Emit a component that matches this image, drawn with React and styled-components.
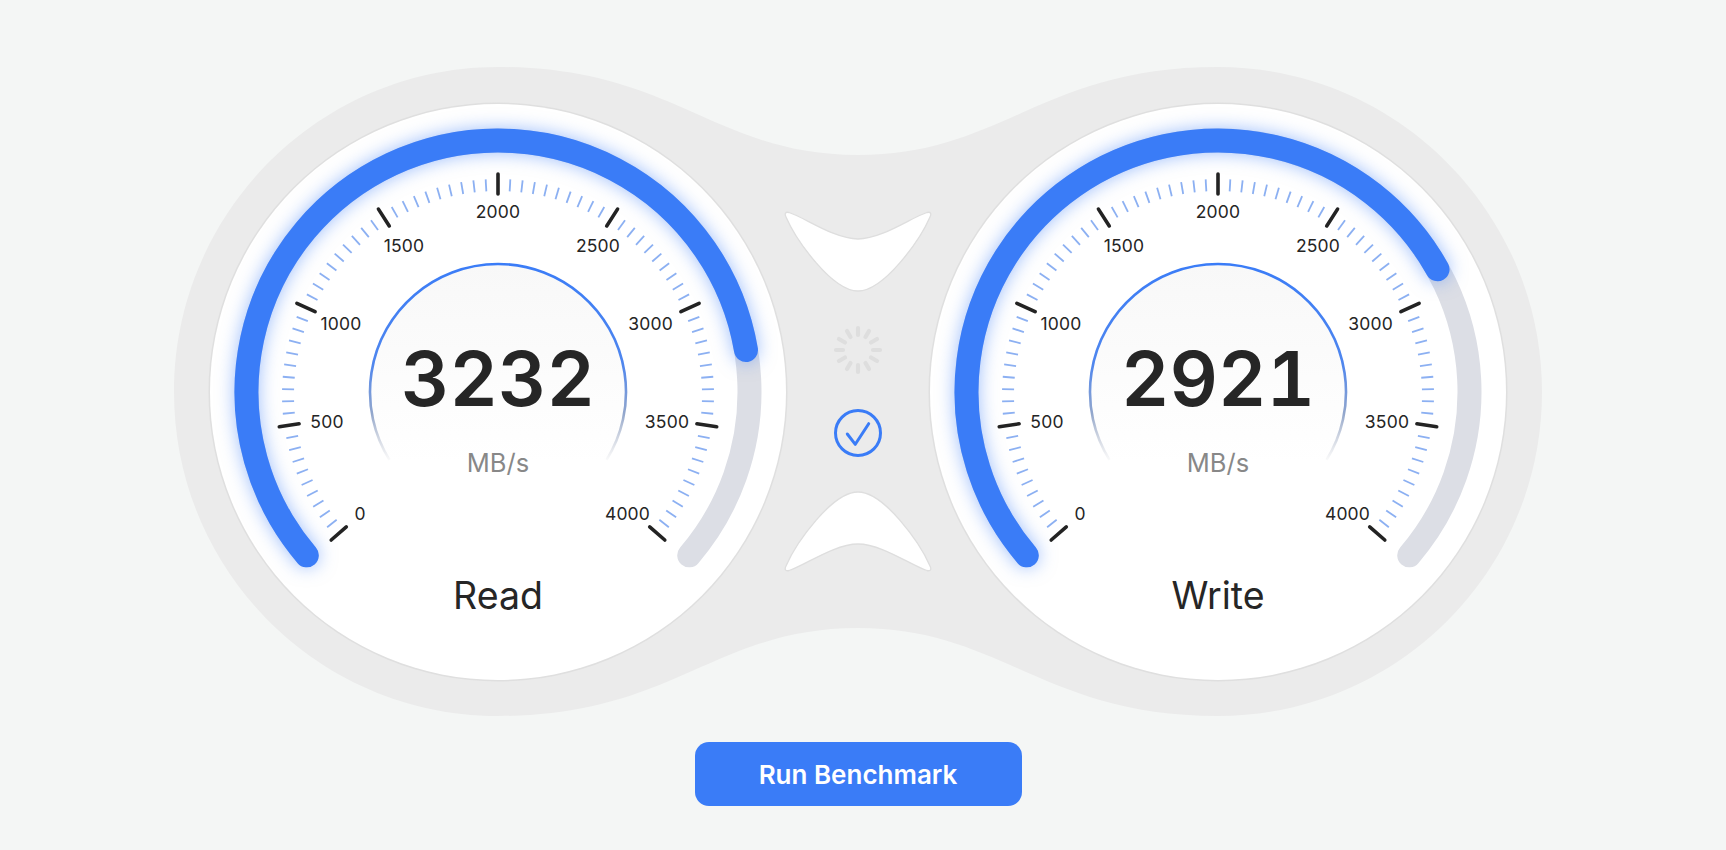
import React from "react";
import styled, { createGlobalStyle } from "styled-components";

const GlobalStyle = createGlobalStyle`
  html, body {
    margin: 0;
    padding: 0;
    background: #f4f6f5;
    font-family: Inter, "Noto Sans", "Liberation Sans", sans-serif;
  }
`;

const BLUE = "#3a7cf7";

const Page = styled.div`
  display: flex;
  flex-direction: column;
  align-items: center;
  width: 1716px;
  height: 850px;
  padding-top: 67px;
  box-sizing: border-box;
  overflow: hidden;
`;

const Stage = styled.div`
  position: relative;
  display: flex;
  justify-content: center;
  width: 1368px;
  height: 650px;
  padding-top: 37px;
  box-sizing: border-box;
`;

const Backdrop = styled.svg`
  position: absolute;
  left: 0;
  top: 0;
  width: 1368px;
  height: 650px;
`;

const Dial = styled.div`
  position: relative;
  flex: none;
  width: 576px;
  height: 576px;
  border-radius: 50%;
  background: #fff;
  box-shadow: 0 0 0 1.5px #dfdfdf;
`;

const DialArt = styled.svg`
  position: absolute;
  inset: 0;
  width: 576px;
  height: 576px;
`;

const Track = styled.path`
  fill: none;
  stroke: #dcdee5;
  stroke-width: 24;
  stroke-linecap: round;
`;

const Progress = styled.path`
  fill: none;
  stroke: ${BLUE};
  stroke-width: 24;
  stroke-linecap: round;
  filter: drop-shadow(0 0 9px rgba(58, 124, 247, 0.5));
`;

const Tick = styled.line`
  stroke: ${(p) => (p.$major ? "#232323" : "#8cb0f2")};
  stroke-width: ${(p) => (p.$major ? 3.6 : 1.8)};
  stroke-linecap: ${(p) => (p.$major ? "round" : "butt")};
`;

const TickLabel = styled.text`
  font-family: Inter, sans-serif;
  font-size: 17.5px;
  letter-spacing: 0.2px;
  fill: #242424;
  text-anchor: middle;
  dominant-baseline: central;
`;

const Readout = styled.div`
  position: absolute;
  inset: 0;
  display: flex;
  flex-direction: column;
  align-items: center;
  padding-top: 229px;
  box-sizing: border-box;
  color: #262626;
`;

const Speed = styled.div`
  font-size: 75px;
  line-height: 92px;
  font-weight: 560;
  font-variant-numeric: tabular-nums;
`;

const Unit = styled.div`
  margin-top: 23px;
  font-size: 25.5px;
  line-height: 30px;
  color: #888;
`;

const GaugeName = styled.div`
  margin-top: 96px;
  font-size: 37.5px;
  line-height: 44px;
  font-weight: 430;
`;

const Middle = styled.div`
  position: relative;
  flex: none;
  width: 144px;
  height: 576px;
  padding-bottom: 2px;
  box-sizing: border-box;
  display: flex;
  flex-direction: column;
  align-items: center;
  justify-content: center;
  gap: 35px;
`;

const Wing = styled.svg`
  display: block;
  width: 148px;
  height: 82px;
  margin: -1px 0;
  transform: ${(p) => (p.$flip ? "scaleY(-1)" : "none")};
`;

const StatusIcon = styled.svg`
  display: block;
  width: 50px;
  height: 50px;
  margin: -1px 0;
`;

const RunButton = styled.button`
  width: 327px;
  height: 64px;
  margin-top: 25px;
  border: none;
  border-radius: 14px;
  background: ${BLUE};
  color: #fff;
  font-family: Inter, sans-serif;
  font-size: 26px;
  font-weight: 600;
`;

const polar = (r, deg) => {
  const a = (deg * Math.PI) / 180;
  return [r * Math.sin(a), -r * Math.cos(a)];
};

const arcPath = (r, from, to) => {
  const [x1, y1] = polar(r, from);
  const [x2, y2] = polar(r, to);
  const large = to - from > 180 ? 1 : 0;
  return `M${x1} ${y1}A${r} ${r} 0 ${large} 1 ${x2} ${y2}`;
};

const labels = [
  ["0", -138, 121.5],
  ["500", -171, 29],
  ["1000", -157, -68.5],
  ["1500", -94, -147],
  ["2000", 0, -181],
  ["2500", 100, -147],
  ["3000", 152.6, -68.5],
  ["3500", 169, 29],
  ["4000", 129.5, 121.5],
];

const ticks = Array.from({ length: 81 }, (_, i) => i);

function Gauge({ id, value, name, end }) {
  return (
    <Dial>
      <DialArt viewBox="-288 -288 576 576">
        <defs>
          <linearGradient id={`${id}-ring`} gradientUnits="userSpaceOnUse" x1="0" y1="-128" x2="0" y2="72">
            <stop offset="0" stopColor={BLUE} />
            <stop offset="0.5" stopColor="#4f86ee" />
            <stop offset="0.75" stopColor="#93a7cc" />
            <stop offset="1" stopColor="#b9bcc4" stopOpacity="0" />
          </linearGradient>
          <linearGradient id={`${id}-bowl`} gradientUnits="userSpaceOnUse" x1="0" y1="-128" x2="0" y2="72">
            <stop offset="0" stopColor="#f8f8f8" />
            <stop offset="1" stopColor="#ffffff" />
          </linearGradient>
        </defs>
        <path d={arcPath(128, -122, 122)} fill={`url(#${id}-bowl)`} stroke={`url(#${id}-ring)`} strokeWidth="2.6" />
        <Track d={arcPath(251.5, -130.5, 130.5)} />
        <Progress d={arcPath(251.5, -130.5, end)} />
        <g transform="translate(0 3)">
          {ticks.map((i) => {
            const major = i % 10 === 0;
            const deg = -131 + i * 3.275;
            const [x1, y1] = polar(major ? 201 : 204, deg);
            const [x2, y2] = polar(major ? 221 : 216, deg);
            return <Tick key={i} $major={major} x1={x1} y1={y1} x2={x2} y2={y2} />;
          })}
        </g>
        {labels.map(([text, x, y]) => (
          <TickLabel key={text} x={x} y={y}>
            {text}
          </TickLabel>
        ))}
      </DialArt>
      <Readout>
        <Speed>{value}</Speed>
        <Unit>MB/s</Unit>
        <GaugeName>{name}</GaugeName>
      </Readout>
    </Dial>
  );
}

function Spinner() {
  return (
    <StatusIcon viewBox="-25 -25 50 50">
      {Array.from({ length: 12 }, (_, i) => {
        const [x1, y1] = polar(15, i * 30);
        const [x2, y2] = polar(22, i * 30);
        return <line key={i} x1={x1} y1={y1} x2={x2} y2={y2} stroke="#dedede" strokeWidth="4.2" strokeLinecap="round" />;
      })}
    </StatusIcon>
  );
}

function DoneMark() {
  return (
    <StatusIcon viewBox="-25 -25 50 50">
      <circle r="22.5" fill="none" stroke={BLUE} strokeWidth="3" />
      <path d="M-10.7 1L-2.7 11.3L10.7 -9.3" fill="none" stroke={BLUE} strokeWidth="3" strokeLinecap="round" strokeLinejoin="round" />
    </StatusIcon>
  );
}

function WingShape({ flip }) {
  return (
    <Wing viewBox="0 0 148 82" $flip={flip}>
      <path
        d="M5 2.5C20 7 50 29 74 29C98 29 128 7 143 2.5C147 1.5 147.500 4 146 7C136 30 100 81 74 81C48 81 12 30 2 7C0.500 4 1 1.500 5 2.500Z"
        fill="#fff"
        stroke="#dedede"
        strokeWidth="1.3"
      />
    </Wing>
  );
}

export default function App() {
  return (
    <>
      <GlobalStyle />
      <Page>
        <Stage>
          <Backdrop viewBox="0 0 1368 650">
            <path
              d="M324 0C500 0 540 88 684 88C828 88 868 0 1044 0C1223 0 1368 146 1368 325C1368 504 1223 649 1044 649C868 649 828 561 684 561C540 561 500 649 324 649C145 649 0 504 0 325C0 146 145 0 324 0Z"
              fill="#ebebeb"
            />
          </Backdrop>
          <Gauge id="read" value="3232" name="Read" end={80.4} />
          <Middle>
            <WingShape />
            <Spinner />
            <DoneMark />
            <WingShape flip />
          </Middle>
          <Gauge id="write" value="2921" name="Write" end={60.8} />
        </Stage>
        <RunButton>Run Benchmark</RunButton>
      </Page>
    </>
  );
}
